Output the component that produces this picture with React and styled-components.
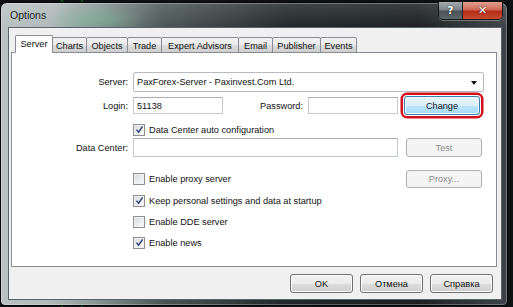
import React from 'react';
import styled, { createGlobalStyle, css } from 'styled-components';

const GlobalStyle = createGlobalStyle`
  html, body {
    margin: 0;
    padding: 0;
    background: #0d1111;
  }
  * {
    box-sizing: border-box;
  }
`;

const px = (v) => (typeof v === 'number' ? `${v}px` : v);

const Desktop = styled.div`
  width: 513px;
  height: 307px;
  padding: 2px 5px 1px 0;
  display: flex;
  background:
    linear-gradient(90deg, transparent 60px, rgba(40, 160, 70, 0.5) 62px, transparent 64px, transparent 80px, rgba(40, 160, 70, 0.4) 82px, transparent 84px),
    #0d1111;
  font-family: "Liberation Sans", Arial, sans-serif;
`;

const Window = styled.div`
  flex: 1;
  display: flex;
  flex-direction: column;
  border: 1px solid #060808;
  border-radius: 7px 7px 5px 5px;
  padding: 0 5px 5px 7px;
  background:
    linear-gradient(180deg, rgba(255, 255, 255, 0.14) 0, rgba(255, 255, 255, 0) 26px),
    radial-gradient(ellipse 50px 14px at 95px 16px, rgba(110, 180, 150, 0.5), rgba(110, 180, 150, 0)),
    linear-gradient(90deg, #b9c1c1 0%, #b0b9b8 10%, #8c9996 18%, #4a5654 32%, #222829 56%, #1b1f20 82%, #3d4346 100%);
  box-shadow: inset 0 0 0 1px rgba(255, 255, 255, 0.28);
`;

const TitleBar = styled.div`
  height: 24px;
  display: flex;
  align-items: flex-start;
  justify-content: space-between;
`;

const Title = styled.div`
  align-self: center;
  padding-left: 2px;
  font-size: 10.5px;
  color: #202425;
`;

const CaptionButtons = styled.div`
  display: flex;
  margin-top: -1px;
  margin-right: -1px;
  border: 1px solid #141818;
  border-top: none;
  border-radius: 0 0 5px 5px;
  overflow: hidden;
  box-shadow: 0 1px 0 rgba(255, 255, 255, 0.3);
`;

const CaptionButton = styled.div`
  height: 17px;
  width: ${({ $w }) => $w}px;
  display: flex;
  align-items: center;
  justify-content: center;
  color: #ffffff;
  font-family: "DejaVu Sans", sans-serif;
  font-weight: bold;
  font-size: ${({ $close }) => ($close ? '11px' : '10px')};
  text-shadow: 0 0 2px rgba(0, 0, 0, 0.8);
  background: ${({ $close }) =>
    $close
      ? 'linear-gradient(180deg, #e0a090 0%, #cf6a56 45%, #b52d18 55%, #c44a2e 100%)'
      : 'linear-gradient(180deg, #a4acb0 0%, #7b8488 45%, #4a5256 55%, #5e676b 100%)'};
  border-left: ${({ $close }) => ($close ? '1px solid #1c2022' : 'none')};
`;

const Client = styled.div`
  flex: 1;
  display: flex;
  flex-direction: column;
  background: #f0f0f0;
  border: 1px solid #58646a;
  padding: 7px 4px 0 2px;
  font-size: 9.2px;
  color: #111;
`;

const TabStrip = styled.div`
  display: flex;
  align-items: flex-end;
  height: 18px;
  padding-left: 4px;
  margin-bottom: -1px;
  position: relative;
  z-index: 1;
`;

const Tab = styled.div`
  width: ${({ $w }) => $w}px;
  height: ${({ $active }) => ($active ? 18 : 16)}px;
  margin-right: -1px;
  display: flex;
  align-items: center;
  justify-content: center;
  border: 1px solid #898c95;
  border-bottom: ${({ $active }) => ($active ? '1px solid #ffffff' : '1px solid #898c95')};
  border-radius: 2px 2px 0 0;
  background: ${({ $active }) =>
    $active ? '#ffffff' : 'linear-gradient(180deg, #f2f2f2 0%, #ebebeb 50%, #dddddd 51%, #cfcfcf 100%)'};
  padding-top: ${({ $active }) => ($active ? 0 : 1)}px;
`;

const Panel = styled.div`
  flex: 1;
  display: flex;
  flex-direction: column;
  background: #ffffff;
  border: 1px solid #898c95;
  padding-top: 19px;
`;

const Row = styled.div`
  display: flex;
  align-items: center;
  height: ${({ $h }) => $h}px;
  margin-top: ${({ $mt }) => $mt || 0}px;
  padding-right: ${({ $pr }) => $pr || 0}px;
`;

const Label = styled.div`
  width: ${({ $w }) => $w || 116}px;
  margin-right: 5px;
  text-align: right;
`;

const TextBox = styled.div`
  width: ${({ $w }) => $w}px;
  height: ${({ $h }) => $h}px;
  display: flex;
  align-items: center;
  padding-left: 3px;
  background: #ffffff;
  border: 1px solid #c5c9d0;
  border-top-color: #abadb3;
`;

const Combo = styled(TextBox)`
  position: relative;
  border-radius: 2px;
  border-color: #b8bcc2;
  &::after {
    content: '';
    position: absolute;
    right: 6px;
    top: 8px;
    border-left: 3.5px solid transparent;
    border-right: 3.5px solid transparent;
    border-top: 4px solid #111;
  }
`;

const buttonVariants = {
  normal: css`
    border: 1px solid #707070;
    color: #111;
    background: linear-gradient(180deg, #f2f2f2 0%, #ebebeb 50%, #dddddd 51%, #cfcfcf 100%);
    box-shadow: inset 0 0 0 1px #fcfcfc;
  `,
  hot: css`
    border: 1px solid #3c7fb1;
    color: #111;
    background: linear-gradient(180deg, #eaf6fd 0%, #d9f0fc 50%, #bee6fd 51%, #a7d9f5 100%);
    box-shadow: inset 0 0 0 1px #f4fbfe, 0 0 0 1px #ffffff, 0 0 0 3.5px #d0121e;
  `,
  disabled: css`
    border: 1px solid #adb2b5;
    color: #8c8c8c;
    background: #f4f4f4;
  `,
};

const Button = styled.div`
  width: ${({ $w }) => $w}px;
  height: ${({ $h }) => $h || 19}px;
  margin-left: ${({ $ml }) => px($ml || 0)};
  display: flex;
  align-items: center;
  justify-content: center;
  border-radius: 3px;
  ${({ $variant }) => buttonVariants[$variant || 'normal']}
`;

const CheckRow = styled.div`
  display: flex;
  align-items: center;
  margin-left: 121px;
`;

const Box = styled.div`
  width: 12px;
  height: 12px;
  margin-right: 4px;
  display: flex;
  align-items: center;
  justify-content: center;
  border: 1px solid #8f8f8f;
  background: linear-gradient(135deg, #d3d6db 0%, #eeeff1 60%, #fbfbfb 100%);
  box-shadow: inset 0 0 0 1px #f2f2f2;
`;

const Footer = styled.div`
  display: flex;
  justify-content: flex-end;
  gap: 7px;
  padding: 7px 4px 6px 0;
`;

const tabs = [
  ['Server', 38],
  ['Charts', 35],
  ['Objects', 42],
  ['Trade', 35],
  ['Expert Advisors', 78],
  ['Email', 35],
  ['Publisher', 49],
  ['Events', 37],
];

const Check = ({ checked, children }) => (
  <CheckRow>
    <Box>
      {checked && (
        <svg width="9" height="9" viewBox="0 0 9 9">
          <path d="M1.5 4.6 L3.6 7.2 L7.6 1.4" fill="none" stroke="#31487a" strokeWidth="1.5" />
        </svg>
      )}
    </Box>
    {children}
  </CheckRow>
);

const App = () => {
  return (
    <>
      <GlobalStyle />
      <Desktop>
        <Window>
          <TitleBar>
            <Title>Options</Title>
            <CaptionButtons>
              <CaptionButton $w={23}>?</CaptionButton>
              <CaptionButton $w={40} $close>✕</CaptionButton>
            </CaptionButtons>
          </TitleBar>
          <Client>
            <TabStrip>
              {tabs.map(([name, w], i) => (
                <Tab key={name} $w={w} $active={i === 0}>
                  {name}
                </Tab>
              ))}
            </TabStrip>
            <Panel>
              <Row $h={20}>
                <Label>Server:</Label>
                <Combo $w={351} $h={20}>PaxForex-Server - Paxinvest.Com Ltd.</Combo>
              </Row>
              <Row $h={19} $mt={4}>
                <Label>Login:</Label>
                <TextBox $w={90} $h={17}>51138</TextBox>
                <Label $w={80}>Password:</Label>
                <TextBox $w={90} $h={17} />
                <Button $w={76} $ml={6} $variant="hot">Change</Button>
              </Row>
              <Row $h={13} $mt={8}>
                <Check checked>Data Center auto configuration</Check>
              </Row>
              <Row $h={19} $mt={2}>
                <Label>Data Center:</Label>
                <TextBox $w={265} $h={19} />
                <Button $w={76} $ml={8} $variant="disabled">Test</Button>
              </Row>
              <Row $h={18} $mt={13} $pr={14}>
                <Check>Enable proxy server</Check>
                <Button $w={76} $h={18} $ml="auto" $variant="disabled">
                  Proxy...
                </Button>
              </Row>
              <Row $h={13} $mt={6}>
                <Check checked>Keep personal settings and data at startup</Check>
              </Row>
              <Row $h={13} $mt={8}>
                <Check>Enable DDE server</Check>
              </Row>
              <Row $h={13} $mt={8}>
                <Check checked>Enable news</Check>
              </Row>
            </Panel>
            <Footer>
              <Button $w={63}>OK</Button>
              <Button $w={63}>Отмена</Button>
              <Button $w={63}>Справка</Button>
            </Footer>
          </Client>
        </Window>
      </Desktop>
    </>
  );
};

export default App;
